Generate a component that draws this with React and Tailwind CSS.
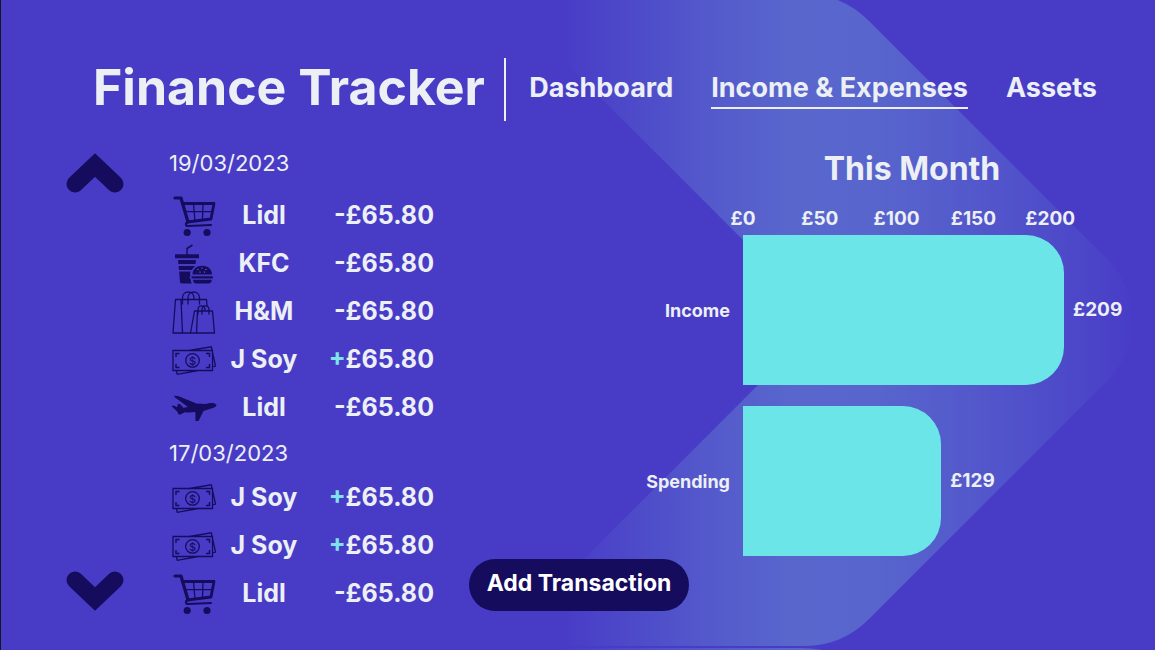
import React from "react";

function CartIcon() {
  return (
    <svg width="43" height="41" viewBox="0 0 43 41" fill="none" stroke="#150c5e" strokeLinecap="round" strokeLinejoin="round" aria-hidden="true">
      <path d="M2 2h6L15 26" strokeWidth="3.2" />
      <path d="M9.500 7.500H41L38 23 14.500 26" strokeWidth="2.800" />
      <path d="M14.500 26c-2.500 1-2 4 .5 4L38 29" strokeWidth="2.200" />
      <path d="M20.500 8l1.500 17M30 8l-.5 16M12 15.700h27" strokeWidth="1.300" />
      <circle cx="14.200" cy="36.500" r="3.600" fill="#150c5e" stroke="none" />
      <circle cx="34" cy="36.500" r="3.600" fill="#150c5e" stroke="none" />
    </svg>
  );
}

function FoodIcon() {
  return (
    <svg width="38" height="40" viewBox="0 0 38 40" fill="#150c5e" aria-hidden="true">
      <path d="M12 11V4.500L17.500 1" fill="none" stroke="#150c5e" strokeWidth="1.500" />
      <path d="M0 10.300h24v4H0zM3 16h18l-.4 4H3.400zM3.600 22h16.600l-2.200 2.300-1 1.700H4zM4.200 27.500h11.600c-1 2-.8 3-.2 4-1.300 1-1.300 3 .2 4 0 2 .4 3 1.200 4H7c-1.500 0-2-.8-2.100-2z" />
      <path d="M17.500 30.500c0-5.500 4.500-8.800 9.700-8.800s9.800 3.300 9.800 8.800zM16.500 32.300h21.300v2.200H16.500zM18 35.800h18.800c0 2.400-1.200 3.700-3.300 3.700H21.300c-2.100 0-3.300-1.300-3.300-3.700z" />
      <g fill="#8b86dc">
        <circle cx="23" cy="25.500" r=".6" />
        <circle cx="27" cy="24" r=".6" />
        <circle cx="31" cy="25.500" r=".6" />
        <circle cx="25" cy="28" r=".6" />
        <circle cx="29.500" cy="28" r=".6" />
      </g>
    </svg>
  );
}

function BagsIcon() {
  return (
    <svg width="44" height="43" viewBox="0 0 44 43" fill="none" stroke="#150c5e" strokeWidth="1.300" strokeLinejoin="round" aria-hidden="true">
      <path d="M35 15l-.5-6.500h-31L1 42h41.500l-2-22h-18l-4 22M9 8.500L10.500 42M25.500 20l-1 22" />
      <path d="M10.500 13.500V7c0-8 11.500-8 11.500 0v1.500M16 13.500V7c0-8 11.500-8 11.500 0v6.500" />
      <path d="M26 23.500V19c0-5.500 7-5.500 7 0v1M30 23.500V19c0-5.500 7-5.500 7 0v4.500" />
    </svg>
  );
}

function CashIcon() {
  return (
    <svg width="45" height="29" viewBox="0 0 45 29" fill="none" stroke="#150c5e" strokeWidth="1.300" aria-hidden="true">
      <path d="M1 4.500h39.500v20H1zM17 4.500L39.300.8l4.200 19.200-3 1M4.300 24.500l1 3.800 21-3.800" />
      <path d="M4 11V7.500h3.500M34 7.500h3.500V11M4 18v3.500h3.500M34 21.500h3.500V18" strokeWidth="1.500" />
      <circle cx="20.500" cy="14.400" r="6.800" />
      <text x="20.500" y="18.500" textAnchor="middle" fill="#150c5e" stroke="none" className="font-['Inter',sans-serif] text-[11px] font-medium">$</text>
    </svg>
  );
}

function PlaneIcon() {
  return (
    <svg width="46" height="27" viewBox="0 0 46 27" fill="#150c5e" aria-hidden="true">
      <path d="M3 .8L7 .9 25.500 8.500 34 9c3-.8 6-1.300 8-1 2.500.4 3.500 1.400 3.400 2.300-.1 1.300-2 2.300-4.400 3L32.500 16 27.500 26h-3l-.2-9c-4 .6-8 .5-10.500.2L9.500 19.600H7.500L6.500 17 .5 11l2.200-.5L6 12.200 7 8.800l2.300.4 3 3.600 4.700-.8L4 2.500z" />
    </svg>
  );
}

function ArrowIcon({ className }) {
  return (
    <svg width="58" height="40" viewBox="0 0 58 40" fill="none" className={className} aria-hidden="true">
      <path d="M9 31L29 12 49 31" stroke="#150c5e" strokeWidth="17" strokeLinecap="round" strokeLinejoin="miter" />
    </svg>
  );
}

function Backdrop() {
  return (
    <svg
      className="absolute inset-0 h-full w-full"
      viewBox="0 0 1155 650"
      preserveAspectRatio="xMaxYMid slice"
      aria-hidden="true"
    >
      <defs>
        <linearGradient id="sheen" gradientUnits="userSpaceOnUse" x1="565" y1="0" x2="1135" y2="0">
          <stop offset="0" stopColor="#5967cd" stopOpacity="0" />
          <stop offset="0.22" stopColor="#5967cd" stopOpacity="0.6" />
          <stop offset="0.4" stopColor="#5967cd" />
          <stop offset="0.55" stopColor="#5967cd" stopOpacity="0.95" />
          <stop offset="0.8" stopColor="#5967cd" stopOpacity="0.5" />
          <stop offset="1" stopColor="#5967cd" stopOpacity="0" />
        </linearGradient>
      </defs>
      <path
        fill="url(#sheen)"
        d="M540 -6H805Q842 -6 869 21L1112 264Q1155 320 1112 376L869 619Q842 646 805 646H540V603L823 320 540 37Z"
      />
      <path fill="url(#sheen)" d="M540 648H800Q812 648 822 650H540Z" />
    </svg>
  );
}

const groups = [
  {
    date: "19/03/2023",
    gap: "gap-3",
    items: [
      { Icon: CartIcon, name: "Lidl", sign: "-" },
      { Icon: FoodIcon, name: "KFC", sign: "-" },
      { Icon: BagsIcon, name: "H&M", sign: "-" },
      { Icon: CashIcon, name: "J Soy", sign: "+" },
      { Icon: PlaneIcon, name: "Lidl", sign: "-" },
    ],
  },
  {
    date: "17/03/2023",
    gap: "gap-1",
    items: [
      { Icon: CashIcon, name: "J Soy", sign: "+" },
      { Icon: CashIcon, name: "J Soy", sign: "+" },
      { Icon: CartIcon, name: "Lidl", sign: "-" },
    ],
  },
];

const AXIS_MAX = 250;
const ticks = [0, 50, 100, 150, 200];
const bars = [
  { label: "Income", value: 209 },
  { label: "Spending", value: 129 },
];

function Transactions() {
  return (
    <div className="flex w-[265px] shrink-0 flex-col gap-1.5">
      {groups.map((group) => (
        <section key={group.date} className={`flex flex-col ${group.gap}`}>
          <h2 className="h-8 text-[22px] leading-8 font-normal">{group.date}</h2>
          <ul>
            {group.items.map(({ Icon, name, sign }, i) => (
              <li key={i} className="flex h-12 items-center pt-0.5 text-[25px] font-bold">
                <span className="flex w-[50px] justify-center">
                  <Icon />
                </span>
                <span className="w-[90px] text-center">{name}</span>
                <span className="flex-1 text-right">
                  <span className={sign === "+" ? "text-[#7fe3ea]" : ""}>{sign}</span>£65.80
                </span>
              </li>
            ))}
          </ul>
        </section>
      ))}
    </div>
  );
}

function Chart() {
  return (
    <section className="font-bold">
      <div className="grid grid-cols-[274px_1fr]">
        <h2 className="col-start-2 h-11 pr-[46px] text-center text-[32px] leading-11">This Month</h2>
        <div className="col-start-2 mt-3 flex h-8 items-center text-[19px]">
          {ticks.map((t) => (
            <div key={t} className="w-1/5">
              <span className="inline-block -translate-x-1/2">£{t}</span>
            </div>
          ))}
        </div>
      </div>
      <div className="flex flex-col gap-[21px]">
        {bars.map((b) => (
          <div key={b.label} className="grid grid-cols-[274px_1fr] items-center">
            <span className="pr-[13px] text-right text-[18px]">{b.label}</span>
            <div className="flex items-center gap-[9px]">
              <div
                className="h-[150px] shrink-0 rounded-r-[38px] bg-[#6ce5e8]"
                style={{ width: `${(b.value / AXIS_MAX) * 100}%` }}
              />
              <span className="text-[19px]">£{b.value}</span>
            </div>
          </div>
        ))}
      </div>
    </section>
  );
}

export default function App() {
  return (
    <div className="relative min-h-screen overflow-hidden border-l border-[#16161c] bg-[#483cc7] font-['Inter',sans-serif] text-[#eceff4]">
      <Backdrop />
      <div className="relative">
        <header className="flex items-center pt-[58px] pr-[58px] pl-[92px]">
          <h1 className="pb-1 text-[50px] leading-[59px] font-bold whitespace-nowrap">Finance Tracker</h1>
          <div className="ml-auto h-[63px] w-[2px] bg-[#eceff4]" />
          <nav className="ml-[23px] flex gap-[38px] text-[27px] leading-[34px] font-bold whitespace-nowrap">
            <a href="#dashboard" className="border-b-2 border-transparent pb-[2px]">Dashboard</a>
            <a href="#income" aria-current="page" className="border-b-2 border-[#eceff4] pb-[2px]">Income &amp; Expenses</a>
            <a href="#assets" className="border-b-2 border-transparent pb-[2px]">Assets</a>
          </nav>
        </header>
        <main className="mt-[26px] flex pr-7 pl-[65px]">
          <div className="mr-[45px] flex flex-col justify-between py-1.5">
            <button type="button" aria-label="Newer transactions">
              <ArrowIcon />
            </button>
            <button type="button" aria-label="Older transactions">
              <ArrowIcon className="rotate-180" />
            </button>
          </div>
          <Transactions />
          <div className="ml-[35px] flex-1">
            <Chart />
            <button type="button" className="mt-[3px] h-[52px] w-[220px] rounded-full bg-[#150c5e] pb-1 text-[23px] font-bold whitespace-nowrap text-white">
              Add Transaction
            </button>
          </div>
        </main>
      </div>
    </div>
  );
}
